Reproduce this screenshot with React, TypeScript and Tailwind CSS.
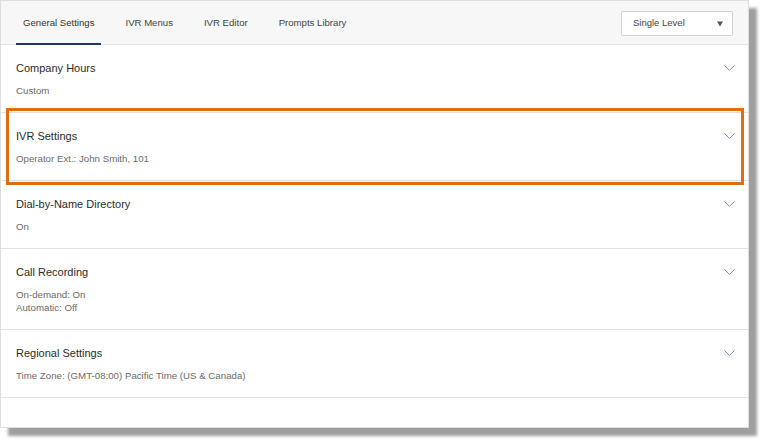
import React from "react";

const font = { fontFamily: '"Liberation Sans", Arial, sans-serif' };

function Chevron() {
  return (
    <svg width="11" height="6" viewBox="0 0 11 6" className="shrink-0">
      <path d="M0.5 0.5 L5.5 5.3 L10.5 0.5" fill="none" stroke="#7b8aa6" strokeWidth="1" />
    </svg>
  );
}

type Sec = { title: string; lines: string[] };

const sections: Sec[] = [
  { title: "Company Hours", lines: ["Custom"] },
  { title: "IVR Settings", lines: ["Operator Ext.: John Smith, 101"] },
  { title: "Dial-by-Name Directory", lines: ["On"] },
  { title: "Call Recording", lines: ["On-demand: On", "Automatic: Off"] },
  { title: "Regional Settings", lines: ["Time Zone: (GMT-08:00) Pacific Time (US & Canada)"] },
];

const tabs = ["General Settings", "IVR Menus", "IVR Editor", "Prompts Library"];

export default function App() {
  return (
    <div className="relative w-[764px] h-[443px] bg-white overflow-hidden" style={font}>
      <div className="w-[749px] h-[428px] bg-white border border-[#dedede] shadow-[8px_8px_3px_rgba(0,0,0,0.38)] flex flex-col">
        <div className="h-[44px] shrink-0 bg-[#f7f7f7] border-b border-[#e2e2e2] flex items-stretch justify-between pl-[15px] pr-[15px]">
          <div className="flex items-stretch gap-[17px]">
            {tabs.map((t, i) => (
              <div
                key={t}
                className={
                  i === 0
                    ? "px-[7px] flex items-center text-[9.6px] text-[#333] border-b-2 border-[#1d3a5c] -mb-px pt-[3px]"
                    : "px-[7px] flex items-center text-[9.6px] text-[#444] -mb-px border-b-2 border-transparent pt-[3px]"
                }
              >
                {t}
              </div>
            ))}
          </div>
          <div className="flex items-center pt-[2px]">
            <div className="w-[112px] h-[25px] bg-white border border-[#d2d2d2] rounded-[2px] flex items-center justify-between pl-[11px] pr-[9px] text-[9.5px] text-[#444]">
              <span>Single Level</span>
              <svg width="6" height="6" viewBox="0 0 6 6">
                <polygon points="0,0.5 6,0.5 3,5.5" fill="#555" />
              </svg>
            </div>
          </div>
        </div>
        {sections.map((s) => (
          <div key={s.title} className="border-b border-[#e3e3e3] pl-[15px] pr-[13px] pt-[16px] pb-[15px]">
            <div className="h-[14px] flex items-center justify-between">
              <span className="text-[11px] leading-[14px] text-[#2b2b2b]">{s.title}</span>
              <Chevron />
            </div>
            <div className="mt-[9px]">
              {s.lines.map((l) => (
                <div key={l} className="text-[9.7px] leading-[13px] text-[#6b6b6b]">
                  {l}
                </div>
              ))}
            </div>
          </div>
        ))}
      </div>
      <div className="absolute left-[6px] top-[108px] w-[738px] h-[77px] border-[3px] border-[#e46c0a] pointer-events-none" />
    </div>
  );
}
